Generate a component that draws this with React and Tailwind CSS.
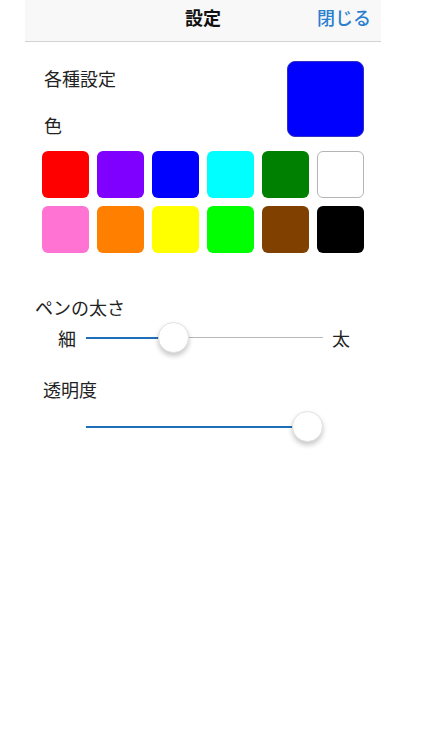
import React from "react";

const colors = [
  "#ff0000", "#8000ff", "#0000ff", "#00ffff", "#008000", "#ffffff",
  "#ff73d2", "#ff8000", "#ffff00", "#00ff00", "#804000", "#000000",
];

const Slider = ({ value }) => {
  // thumb travels inside the track (31px thumb, 237px track)
  const center = 15.5 + value * 206;
  return (
    <div className="relative h-[31px] w-[237px] flex items-center">
      <div className="h-[2px] bg-[#1f6fb8]" style={{ width: center }} />
      <div className="h-[1px] flex-1 bg-[#b8b8b8]" />
      <div
        className="absolute top-0 w-[31px] h-[31px] rounded-full bg-white border border-[#e2e2e2] shadow-[0_3px_5px_rgba(0,0,0,0.22)]"
        style={{ left: center - 15.5 }}
      />
    </div>
  );
};

const App = () => {
  return (
    <div className="min-h-[750px] bg-white font-['Noto_Sans_CJK_JP',sans-serif] text-[#222]">
      <div className="ml-[25px] w-[356px]">
        <div className="h-[42px] bg-[#f8f8f8] border-b border-[#d2d2d2] grid grid-cols-[1fr_auto_1fr] items-start pt-[8px]">
          <div />
          <h1 className="text-[18px] font-bold leading-none text-[#111]">設定</h1>
          <div className="flex justify-end pr-[10px]">
            <button className="text-[18px] font-medium text-[#2a7fcf] leading-none">閉じる</button>
          </div>
        </div>

        <div className="flex justify-between pt-[19px] pl-[19px] pr-[17px]">
          <div className="flex flex-col pt-[5px] gap-[23px] text-[18px] leading-[24px]">
            <p>各種設定</p>
            <p>色</p>
          </div>
          <div className="w-[77px] h-[76px] rounded-[8px] bg-[#0000ff] border border-[#3030c0]" />
        </div>

        <div className="grid grid-cols-[repeat(6,47px)] gap-x-[8px] gap-y-[8px] mt-[14px] ml-[17px]">
          {colors.map((c, i) => (
            <div
              key={i}
              className={"h-[47px] rounded-[6px] " + (c === "#ffffff" ? "border border-[#b5b5b5]" : "")}
              style={{ backgroundColor: c }}
            />
          ))}
        </div>

        <p className="mt-[42px] ml-[10px] text-[18px] leading-[24px]">ペンの太さ</p>
        <div className="flex items-center mt-[3px] ml-[33px]">
          <span className="text-[18px] leading-none w-[28px]">細</span>
          <Slider value={0.35} />
          <span className="text-[18px] leading-none ml-[9px]">太</span>
        </div>

        <p className="mt-[24px] ml-[18px] text-[18px] leading-[24px]">透明度</p>
        <div className="mt-[10px] ml-[61px]">
          <Slider value={1} />
        </div>
      </div>
    </div>
  );
};

export default App;
